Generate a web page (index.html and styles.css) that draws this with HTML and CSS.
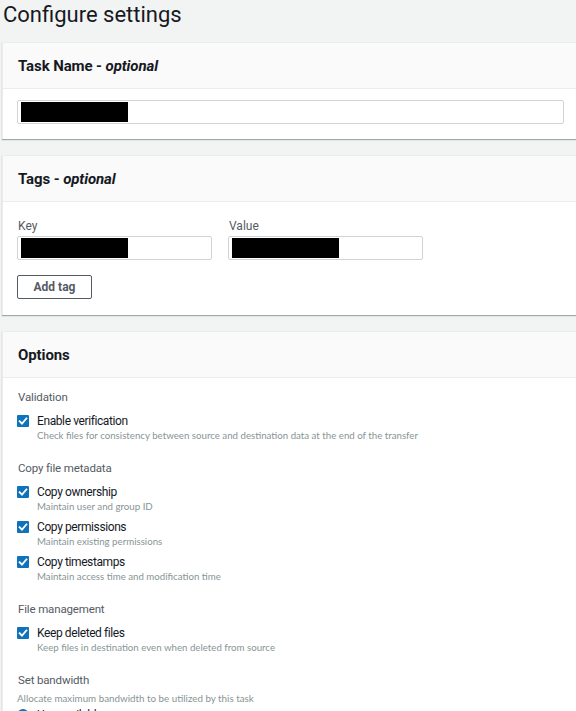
FILE: index.html
```html
<!DOCTYPE html>
<html>
<head>
<meta charset="utf-8">
<link rel="stylesheet" href="styles.css">
</head>
<body>
<h1 class="title">Configure settings</h1>

<section class="card">
  <div class="card-header"><h2>Task Name - <em>optional</em></h2></div>
  <div class="card-body body-task">
    <div class="input input-wide"><span class="redact"></span></div>
  </div>
</section>

<section class="card">
  <div class="card-header"><h2>Tags - <em>optional</em></h2></div>
  <div class="card-body body-tags">
    <div class="tag-row">
      <div class="field">
        <div class="field-label">Key</div>
        <div class="input input-tag"><span class="redact"></span></div>
      </div>
      <div class="field">
        <div class="field-label">Value</div>
        <div class="input input-tag"><span class="redact"></span></div>
      </div>
    </div>
    <button class="btn">Add tag</button>
  </div>
</section>

<section class="card">
  <div class="card-header"><h2>Options</h2></div>
  <div class="card-body body-options">
    <div class="group">
      <div class="group-label">Validation</div>
      <div class="check-row">
        <span class="checkbox"><svg viewBox="0 0 12 12" width="12" height="12"><path d="M2.6 6.2 L5 8.6 L9.4 3.4" fill="none" stroke="#fff" stroke-width="1.8" stroke-linecap="square"/></svg></span>
        <div class="check-text">
          <div class="check-label">Enable verification</div>
          <div class="check-desc">Check files for consistency between source and destination data at the end of the transfer</div>
        </div>
      </div>
    </div>

    <div class="group">
      <div class="group-label">Copy file metadata</div>
      <div class="check-row">
        <span class="checkbox"><svg viewBox="0 0 12 12" width="12" height="12"><path d="M2.6 6.2 L5 8.6 L9.4 3.4" fill="none" stroke="#fff" stroke-width="1.8" stroke-linecap="square"/></svg></span>
        <div class="check-text">
          <div class="check-label">Copy ownership</div>
          <div class="check-desc">Maintain user and group ID</div>
        </div>
      </div>
      <div class="check-row">
        <span class="checkbox"><svg viewBox="0 0 12 12" width="12" height="12"><path d="M2.6 6.2 L5 8.6 L9.4 3.4" fill="none" stroke="#fff" stroke-width="1.8" stroke-linecap="square"/></svg></span>
        <div class="check-text">
          <div class="check-label">Copy permissions</div>
          <div class="check-desc">Maintain existing permissions</div>
        </div>
      </div>
      <div class="check-row">
        <span class="checkbox"><svg viewBox="0 0 12 12" width="12" height="12"><path d="M2.6 6.2 L5 8.6 L9.4 3.4" fill="none" stroke="#fff" stroke-width="1.8" stroke-linecap="square"/></svg></span>
        <div class="check-text">
          <div class="check-label">Copy timestamps</div>
          <div class="check-desc">Maintain access time and modification time</div>
        </div>
      </div>
    </div>

    <div class="group">
      <div class="group-label">File management</div>
      <div class="check-row">
        <span class="checkbox"><svg viewBox="0 0 12 12" width="12" height="12"><path d="M2.6 6.2 L5 8.6 L9.4 3.4" fill="none" stroke="#fff" stroke-width="1.8" stroke-linecap="square"/></svg></span>
        <div class="check-text">
          <div class="check-label">Keep deleted files</div>
          <div class="check-desc">Keep files in destination even when deleted from source</div>
        </div>
      </div>
    </div>

    <div class="group">
      <div class="group-label">Set bandwidth</div>
      <div class="group-desc">Allocate maximum bandwidth to be utilized by this task</div>
      <div class="radio-row">
        <span class="radio"></span>
        <span class="check-label">Use available</span>
      </div>
    </div>
  </div>
</section>
</body>
</html>
```

FILE: styles.css
```css
html, body {
  margin: 0;
  padding: 0;
}
body {
  background: #f2f3f3;
  font-family: Roboto, "Liberation Sans", sans-serif;
  color: #16191f;
  overflow: hidden;
  width: 576px;
  height: 711px;
}
.title {
  margin: 0;
  padding: 0 0 0 3px;
  height: 42px;
  line-height: 30px;
  font-size: 22px;
  font-weight: 400;
  color: #16191f;
}
.card {
  margin: 0 -20px 16px 2px;
  background: #fff;
  border-top: 1px solid #eaeded;
  border-left: 1px solid #eaeded;
  box-shadow: 0 1px 1px 0 rgba(0, 28, 36, 0.35);
}
.card-header {
  height: 45px;
  display: flex;
  align-items: center;
  padding-left: 15px;
  background: #fafafa;
  border-bottom: 1px solid #eaeded;
}
.card-header h2 {
  margin: 0;
  font-size: 15px;
  font-weight: 700;
  letter-spacing: -0.1px;
}
.card-header h2 em {
  font-style: italic;
}
.card-body {
  padding: 0 0 0 14px;
}
.body-task {
  padding-top: 11px;
  padding-bottom: 15px;
}
.input {
  box-sizing: border-box;
  height: 24px;
  border: 1px solid #cfd5d6;
  border-radius: 2px;
  background: #fff;
  padding: 1px 3px;
}
.input-wide {
  width: 547px;
}
.input-tag {
  width: 195px;
}
.redact {
  display: block;
  width: 107px;
  height: 20px;
  background: #000;
}
.body-tags {
  padding-top: 16px;
  padding-bottom: 16px;
}
.tag-row {
  display: flex;
  gap: 16px;
}
.field-label {
  font-size: 12px;
  line-height: 16px;
  color: #545b64;
  margin-bottom: 2px;
  padding-left: 1px;
}
.btn {
  margin-top: 15px;
  box-sizing: border-box;
  width: 75px;
  height: 24px;
  padding: 0;
  background: #fff;
  border: 1px solid #545b64;
  border-radius: 2px;
  font-family: Roboto, "Liberation Sans", sans-serif;
  font-size: 12px;
  font-weight: 700;
  color: #545b64;
  display: block;
}
.body-options {
  padding-top: 11px;
}
.group + .group {
  margin-top: 19px;
}
.group-label {
  font-size: 11.5px;
  line-height: 16px;
  color: #545b64;
  letter-spacing: -0.15px;
  padding-left: 1px;
}
.group-label + .check-row {
  margin-top: 8px;
}
.check-row {
  display: flex;
  align-items: flex-start;
}
.check-row + .check-row {
  margin-top: 7px;
}
.checkbox {
  width: 12px;
  height: 12px;
  margin: 2px 8px 0 0;
  background: #0f73bb;
  border-radius: 1px;
  display: flex;
  flex: none;
}
.check-label {
  font-size: 12px;
  line-height: 16px;
  color: #16191f;
  letter-spacing: -0.4px;
}
.check-desc {
  font-family: Lato, "Open Sans", sans-serif;
  font-size: 9.7px;
  line-height: 12px;
  color: #879596;
}
.group-desc {
  font-family: Lato, "Open Sans", sans-serif;
  font-size: 9.8px;
  line-height: 12px;
  color: #879596;
  margin-top: 4px;
}
.radio-row {
  display: flex;
  align-items: center;
  margin-top: 3px;
}
.radio {
  width: 12px;
  height: 12px;
  border-radius: 50%;
  background: #0f73bb;
  margin: 0 8px 0 0;
}
```
